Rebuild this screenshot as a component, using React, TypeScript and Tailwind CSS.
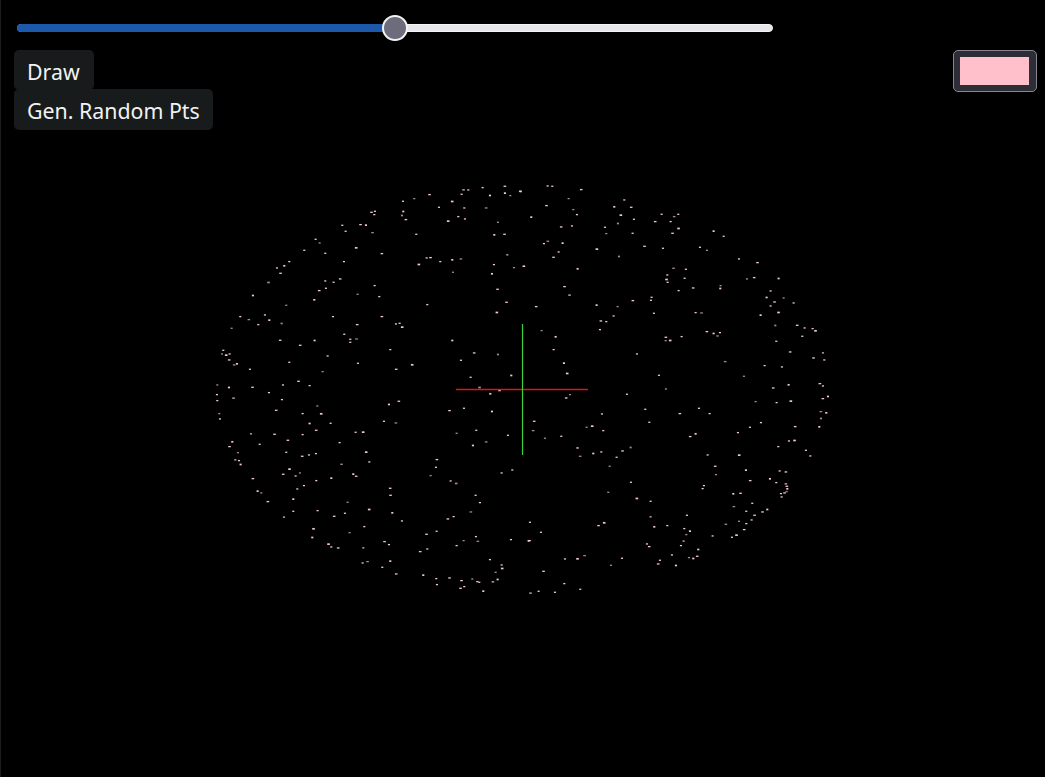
const q1 = [[760,29],[775,30],[818,23],[884,19],[885,39],[901,47],[930,34],[755,43],[840,46],[658,44],[613,56],[579,64],[726,64],[687,82],[763,84],[828,84],[580,94],[495,94],[484,97],[493,104],[576,106],[587,119],[745,110],[765,117],[714,123],[864,127],[397,136],[451,134],[468,135],[407,154],[487,158],[619,163],[853,164],[883,163],[317,178],[329,189],[438,203],[283,211],[346,220],[515,221],[892,224],[650,234],[661,233],[691,245],[727,239],[752,237],[238,245],[402,245],[626,253],[852,254],[912,263],[941,259],[223,257],[201,264],[211,280],[729,277],[846,281],[390,297],[346,303],[371,307],[175,307],[494,317],[348,325],[327,332],[129,346],[443,343],[862,328],[508,350],[313,359],[889,367],[229,376],[652,374],[860,397],[91,410],[165,405],[116,419],[178,420],[369,410],[515,410],[145,434],[215,430],[441,434],[558,432],[569,430],[576,441],[65,445],[403,463],[210,481],[314,481],[421,478],[439,477],[421,487],[727,481],[270,496],[40,511],[36,522],[48,525],[59,522],[541,509],[792,519],[864,523],[353,528],[57,540],[753,541],[81,551],[72,555],[238,547],[444,550],[606,554],[120,568],[338,575],[558,568],[904,586],[782,592],[265,604],[22,615],[57,622],[127,622],[219,615],[299,617],[808,622]];
const q2 = [[83,18],[97,19],[183,29],[2,34],[146,56],[79,77],[313,60],[283,80],[333,82],[160,89],[171,104],[302,105],[425,103],[475,103],[462,110],[34,111],[342,118],[405,125],[452,125],[294,130],[123,141],[156,138],[255,142],[475,145],[259,161],[338,160],[457,160],[581,153],[611,169],[83,184],[72,191],[128,189],[373,199],[540,202],[561,211],[230,207],[429,205],[116,216],[100,232],[297,229],[657,237],[712,248],[12,259],[173,266],[460,265],[498,268],[442,285],[439,298],[494,295],[681,297],[702,293],[776,295],[443,307],[133,320],[602,317],[601,325],[519,324],[476,332],[752,333],[148,345],[395,352],[393,361],[338,362],[740,352],[791,354],[763,366],[821,369],[230,375],[48,380],[293,380],[752,378],[775,397],[402,400],[527,398],[544,399],[722,405],[281,408],[242,423],[259,425],[766,436],[831,436],[854,444],[878,446],[886,452],[65,452],[240,449],[560,455],[581,460],[600,458],[592,468],[847,469],[107,470],[437,472],[485,470],[437,482],[450,481],[769,484],[101,509],[810,516],[909,518],[351,522],[880,534],[913,540],[132,549],[615,545],[734,557],[786,561],[141,580],[417,586],[672,589],[899,611],[806,614],[909,618],[759,624],[438,627]];
const q3 = [[841,11],[868,2],[177,8],[21,14],[70,24],[216,29],[22,32],[566,34],[537,43],[322,48],[718,62],[762,55],[846,64],[198,61],[28,71],[278,71],[333,71],[30,87],[522,94],[557,99],[299,100],[362,100],[318,121],[799,121],[123,131],[193,133],[278,134],[437,127],[459,126],[740,130],[894,136],[233,151],[67,155],[389,158],[828,156],[149,163],[789,166],[58,170],[229,187],[84,188],[468,186],[318,191],[297,195],[276,199],[76,209],[87,212],[680,209],[478,216],[92,223],[394,223],[678,232],[907,240],[238,237],[875,249],[270,249],[219,253],[430,252],[257,258],[438,259],[662,257],[364,264],[128,266],[319,272],[722,273],[738,280],[282,287],[262,297],[540,295],[143,303],[154,309],[541,316],[797,316],[250,327],[173,335],[413,337],[810,338],[477,358],[323,362],[250,364],[782,366],[547,368],[405,370],[372,379],[731,380],[222,381],[713,387],[576,393],[463,410],[310,416],[419,428],[680,424],[649,433],[307,442],[798,440],[803,454],[903,449],[956,452],[523,455],[537,464],[761,452],[355,462],[740,467],[364,471],[384,474],[460,473],[652,477],[630,485],[840,509],[541,513],[472,515],[458,519],[875,525],[876,535],[517,532],[857,547],[558,552],[640,555],[679,566],[718,564],[787,567],[863,568],[754,572],[802,575],[808,577],[848,575],[681,584],[763,590],[751,595],[820,603]];
const q4 = [[150,14],[138,24],[321,13],[924,19],[908,26],[707,35],[770,38],[812,33],[376,58],[537,55],[902,65],[919,68],[246,72],[479,71],[569,71],[903,85],[42,94],[388,97],[723,98],[216,108],[200,112],[690,112],[825,110],[898,110],[250,122],[39,122],[654,128],[527,131],[510,140],[124,139],[75,145],[823,151],[807,153],[775,170],[172,174],[332,172],[244,186],[307,183],[858,181],[220,190],[180,199],[290,202],[563,195],[657,195],[871,198],[269,229],[585,229],[678,240],[779,243],[797,246],[588,254],[750,266],[690,272],[333,277],[769,278],[797,281],[552,287],[548,296],[800,289],[802,296],[800,305],[793,309],[783,311],[640,311],[661,310],[265,307],[785,321],[350,325],[392,334],[697,340],[641,350],[742,358],[679,364],[727,366],[501,376],[392,380],[703,376],[695,390],[30,397],[252,398],[657,394],[679,401],[235,407],[403,410],[442,407],[617,403],[493,416],[510,423],[672,419],[63,427],[499,434],[649,435],[578,438],[636,442],[28,452],[491,453],[381,462],[387,470],[483,467],[535,478],[193,497],[456,495],[135,507],[172,506],[306,505],[507,503],[531,499],[520,505],[420,511],[414,522],[273,526],[468,526],[70,544],[133,581],[181,598],[31,609],[56,604],[105,607]];

// zoom coords -> page coords
const place = (pts: number[][], ox: number, oy: number) => pts.map(([x, y]) => [ox + x / 3, oy + y / 3]);
const points = [
  ...place(q1, 210, 180),
  ...place(q2, 520, 180),
  ...place(q3, 210, 390),
  ...place(q4, 520, 390),
];

function PointCloud() {
  return (
    <svg className="absolute inset-0" width={1045} height={777} viewBox="0 0 1045 777">
      {points.map(([x, y], i) => (
        <rect
          key={i}
          x={x - 1.1}
          y={y - 0.7}
          width={i % 3 === 0 ? 2.6 : 2.1}
          height={i % 4 === 0 ? 1.7 : 1.3}
          fill="#ffd2da"
          opacity={i % 5 === 0 ? 0.65 : 0.95}
        />
      ))}
      <line x1={456} y1={389.5} x2={588} y2={389.5} stroke="#e01414" strokeWidth={1.6} />
      <line x1={522.5} y1={324} x2={522.5} y2={455} stroke="#3fd03f" strokeWidth={1.2} />
    </svg>
  );
}

export default function App() {
  return (
    <div className="relative h-[777px] w-[1045px] overflow-hidden bg-black font-['Noto_Sans',sans-serif] text-white">
      <PointCloud />
      <div className="absolute inset-y-0 left-0 w-px bg-[#1c1c1c]" />

      <div className="relative flex flex-col px-[8px]">
        <div className="relative mt-[24px] ml-[9px] flex h-2 w-[756px] rounded-full border border-[#f4f4f6] bg-[#e6e6ea]">
          <div className="-m-px h-2 w-[378px] rounded-l-full bg-[#1c59ab]" />
          <div className="absolute top-[-10px] left-[364px] h-[26px] w-[26px] rounded-full border-2 border-[#f2f2f2] bg-[#6c6c7c]" />
        </div>

        <div className="mt-[18px] flex items-start justify-between">
          <div className="ml-[6px] flex flex-col items-start">
            <button className="flex h-[40px] w-[80px] items-center rounded-[5px] bg-[#181b1c] px-[13px] pt-[4px] text-[21.33px] leading-none text-[#f2f2f2]">
              Draw
            </button>
            <button className="-mt-px flex h-[41px] items-center rounded-[5px] bg-[#181b1c] px-[13px] pt-[2px] text-[21.33px] leading-none text-[#f2f2f2]">
              Gen. Random Pts
            </button>
          </div>
          <button className="flex h-[42px] w-[84px] items-center justify-center rounded-[5px] border border-[#85858f] bg-[#2c2d36]">
            <span className="mr-px h-[28px] w-[69px] bg-[#ffc0cb]" />
          </button>
        </div>
      </div>
    </div>
  );
}
